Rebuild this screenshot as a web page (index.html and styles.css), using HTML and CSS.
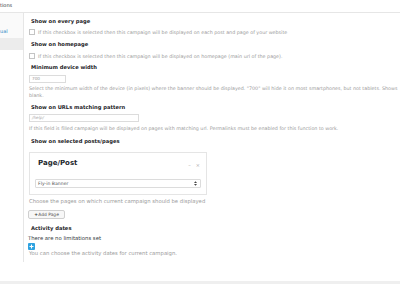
FILE: index.html
```html
<!DOCTYPE html>
<html>
<head>
<meta charset="utf-8">
<link rel="stylesheet" href="styles.css">
</head>
<body>
<div class="topbar"><span class="top-title">tions</span></div>
<div class="main">
  <aside class="side">
    <div class="tab"><span class="tab-link">ual</span></div>
    <div class="tab-active"></div>
  </aside>
  <section class="content">
    <h3 class="h h-first">Show on every page</h3>
    <div class="check-row r1"><span class="cb"></span><span class="hint">If this checkbox is selected then this campaign will be displayed on each post and page of your website</span></div>
    <h3 class="h h2">Show on homepage</h3>
    <div class="check-row r2"><span class="cb"></span><span class="hint">If this checkbox is selected then this campaign will be displayed on homepage (main url of the page).</span></div>
    <h3 class="h h3">Minimum device width</h3>
    <div class="field f1">700</div>
    <p class="hint desc d1">Select the minimum width of the device (in pixels) where the banner should be displayed. "700" will hide it on most smartphones, but not tablets. Shows blank.</p>
    <h3 class="h h4">Show on URLs matching pattern</h3>
    <div class="field f2 ph">/help/</div>
    <p class="hint desc d2">If this field is filled campaign will be displayed on pages with matching url. Permalinks must be enabled for this function to work.</p>
    <h3 class="h h5">Show on selected posts/pages</h3>
    <div class="pp-box">
      <div class="pp-head">
        <span class="pp-title">Page/Post</span>
        <span class="pp-tools"><span>–</span><span>×</span></span>
      </div>
      <div class="pp-select">
        <span>Fly-in Banner</span>
        <svg class="arrows" width="3" height="5" viewBox="0 0 3 5"><path d="M0 2L1.5 0.2L3 2Z M0 3L1.5 4.8L3 3Z" fill="#444"/></svg>
      </div>
    </div>
    <p class="hint desc d3">Choose the pages on which current campaign should be displayed</p>
    <div class="add-btn"><b>+</b>Add Page</div>
    <h3 class="h h6">Activity dates</h3>
    <p class="plain">There are no limitations set</p>
    <div class="plus"><svg width="7" height="7" viewBox="0 0 7 7"><path d="M3.5 1.5V5.5M1.5 3.5H5.5" stroke="#fff" stroke-width="1.1"/></svg></div>
    <p class="hint desc d4">You can choose the activity dates for current campaign.</p>
  </section>
</div>
<div class="footer"></div>
</body>
</html>
```
FILE: styles.css
```css
body {
  margin: 0;
  height: 284px;
  display: flex;
  flex-direction: column;
  font-family: "DejaVu Sans", Verdana, sans-serif;
  background: #fff;
  overflow: hidden;
}
.topbar {
  height: 12px;
  border-bottom: 1px solid #e6e6e6;
  font-size: 5px;
  line-height: 11px;
  color: #32373c;
  flex: none;
}
.main {
  display: flex;
  flex: none;
}
.side {
  width: 23px;
  flex: none;
  border-right: 1px solid #e6e6e6;
}
.tab {
  height: 25px;
  background: #fafafa;
  box-sizing: border-box;
  display: flex;
  align-items: flex-end;
  padding-bottom: 3px;
  font-size: 5px;
  line-height: 7px;
}
.tab-link { color: #2a8bc4; }
.tab-active {
  height: 12px;
  background: #ececec;
}
.content {
  flex: 1;
  min-width: 0;
  padding: 4px 0 5px 5px;
}
.h {
  margin: 0 0 0 2px;
  font-size: 5.2px;
  line-height: 8px;
  font-weight: bold;
  color: #1d2327;
}
.h2 { margin-top: 4px; }
.h3 { margin-top: 3px; }
.h4 { margin-top: 4px; }
.h5 { margin-top: 5px; }
.h6 { margin-top: 5px; }
.check-row {
  display: flex;
  align-items: center;
  gap: 3px;
  height: 8px;
}
.r1 { margin-top: 3px; }
.r2 { margin-top: 4px; }
.cb {
  width: 6px;
  height: 6px;
  box-sizing: border-box;
  border: 1px solid #c4c4c4;
  background: #fff;
  flex: none;
}
.hint {
  font-size: 4.8px;
  line-height: 7px;
  color: #9a9a9a;
  white-space: nowrap;
}
.desc {
  margin: 0;
  white-space: normal;
  width: 371px;
}
.d1 { margin-top: 2px; }
.d2 { margin-top: 3px; }
.d3 { margin-top: 3px; font-size: 5.3px; }
.d4 { margin-top: 0; font-size: 5.3px; }
.field {
  height: 8px;
  box-sizing: border-box;
  border: 1px solid #dcdcdc;
  padding-left: 2px;
  font-size: 4.2px;
  line-height: 6px;
  color: #999;
}
.f1 { width: 37px; margin-top: 4px; }
.f2 { width: 110px; margin-top: 3px; }
.ph { font-style: italic; color: #aaa; }
.pp-box {
  margin-top: 7px;
  width: 178px;
  height: 43px;
  box-sizing: border-box;
  border: 1px solid #e5e5e5;
  padding: 5px 5px 6px;
}
.pp-head {
  display: flex;
  justify-content: space-between;
  align-items: flex-end;
  height: 10px;
}
.pp-title {
  padding-left: 3px;
  font-size: 7px;
  line-height: 10px;
  font-weight: bold;
  color: #23282d;
}
.pp-tools {
  display: flex;
  gap: 5px;
  font-size: 5px;
  line-height: 5px;
  color: #aaa;
  padding-right: 1px;
}
.pp-select {
  margin-top: 11px;
  height: 9px;
  box-sizing: border-box;
  border: 1px solid #dcdcdc;
  border-radius: 1px;
  padding: 0 3px 0 2px;
  display: flex;
  justify-content: space-between;
  align-items: center;
  font-size: 4.6px;
  color: #555;
}
.add-btn {
  margin-top: 5px;
  margin-left: -1px;
  width: 37px;
  height: 9px;
  box-sizing: border-box;
  border: 1px solid #cfcfcf;
  border-radius: 2px;
  background: #f7f7f7;
  display: flex;
  align-items: center;
  justify-content: center;
  font-size: 4.4px;
  color: #555;
}
.add-btn b { color: #333; margin-right: 0.5px; }
.plain {
  margin: 3px 0 0 -1px;
  font-size: 5.3px;
  line-height: 7px;
  color: #32373c;
}
.plus {
  margin-top: 1px;
  margin-left: -1px;
  width: 7px;
  height: 7px;
  border-radius: 1px;
  background: #2ea2e0;
  display: flex;
}
.footer {
  margin-top: auto;
  height: 3px;
  background: #efefef;
  flex: none;
}
```
